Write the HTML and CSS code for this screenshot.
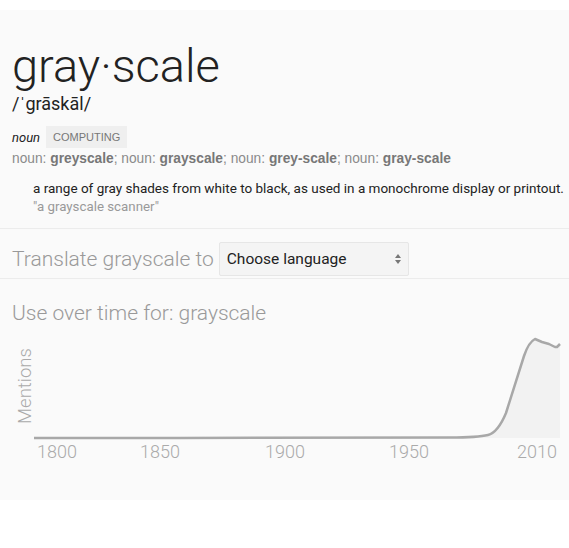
FILE: index.html
```html
<!DOCTYPE html>
<html>
<head>
<meta charset="utf-8">
<link rel="stylesheet" href="styles.css">
</head>
<body>
<div class="panel">
  <div class="entry">
    <div class="headword">gray·scale</div>
    <div class="phonetic">/ˈgrāskāl/</div>
    <div class="pos-row">
      <span class="pos">noun</span>
      <span class="badge">COMPUTING</span>
    </div>
    <div class="forms">noun: <b>greyscale</b>; noun: <b>grayscale</b>; noun: <b>grey-scale</b>; noun: <b>gray-scale</b></div>
    <div class="sense">
      <div class="def">a range of gray shades from white to black, as used in a monochrome display or printout.</div>
      <div class="example">"a grayscale scanner"</div>
    </div>
  </div>
  <div class="translate">
    <span class="translate-label">Translate grayscale to</span>
    <div class="select">
      <span>Choose language</span>
      <svg class="arrows" width="8" height="12" viewBox="0 0 8 12"><path d="M4 1 L7 5 L1 5 Z M4 11 L7 7 L1 7 Z" fill="#777"/></svg>
    </div>
  </div>
  <div class="usage">
    <div class="usage-title">Use over time for: grayscale</div>
    <svg class="chart" width="569" height="130" viewBox="0 335 569 130">
      <path d="M34,437 L180,437 L450,436.5 C470,436.5 480,436 488,434 C496,432 501,424 506,412 L524,355 C527,346 531,340 535,338 L542,341 L549,343 L555,346 L557,346 L560,343 L560,437 Z" fill="#f2f2f2"/>
      <path d="M34,437 L180,437 L450,436.5 C470,436.5 480,436 488,434 C496,432 501,424 506,412 L524,355 C527,346 531,340 535,338 L542,341 L549,343 L555,346 L557,346 L560,343" fill="none" stroke="#a8a8a8" stroke-width="2.5" stroke-linejoin="round"/>
      <text class="axis-title" transform="translate(31,385) rotate(-90)" text-anchor="middle">Mentions</text>
      <text class="tick" x="37" y="457">1800</text>
      <text class="tick" x="140" y="457">1850</text>
      <text class="tick" x="265" y="457">1900</text>
      <text class="tick" x="389" y="457">1950</text>
      <text class="tick" x="517" y="457">2010</text>
    </svg>
  </div>
</div>
</body>
</html>
```
FILE: styles.css
```css
html, body {
  margin: 0;
  padding: 0;
  background: #ffffff;
}
body {
  font-family: Roboto, "Liberation Sans", Arial, sans-serif;
  color: #222;
}
.panel {
  margin-top: 10px;
  height: 490px;
  background: #fafafa;
  box-sizing: border-box;
}
.entry {
  padding: 32px 0 0 12px;
  height: 219px;
  box-sizing: border-box;
  border-bottom: 1px solid #ececec;
}
.headword {
  font-size: 47px;
  font-weight: 300;
  line-height: 47px;
  color: #222;
}
.phonetic {
  font-size: 18px;
  line-height: 22px;
  margin-top: 4px;
  color: #222;
}
.pos-row {
  display: flex;
  align-items: center;
  gap: 6px;
  margin-top: 11px;
  height: 22px;
}
.pos {
  font-style: italic;
  font-size: 13px;
  color: #222;
}
.badge {
  background: #efefef;
  color: #777;
  font-size: 11px;
  line-height: 22px;
  padding: 0 7px;
  font-family: "Liberation Sans", Arial, sans-serif;
}
.forms {
  font-family: "Liberation Sans", Arial, sans-serif;
  font-size: 13.75px;
  line-height: 18px;
  margin-top: 2px;
  color: #8a8a8a;
}
.forms b {
  color: #777;
  font-weight: 700;
}
.sense {
  padding-left: 21px;
  margin-top: 10px;
}
.def {
  font-size: 13.5px;
  line-height: 20px;
  color: #222;
}
.example {
  font-size: 13.3px;
  line-height: 18px;
  color: #999;
}
.translate {
  display: flex;
  gap: 5px;
  height: 50px;
  padding: 13px 0 0 12px;
  align-items: flex-start;
  border-bottom: 1px solid #ececec;
  box-sizing: border-box;
}
.translate-label {
  font-size: 21px;
  font-weight: 300;
  line-height: 34px;
  color: #999;
}
.select {
  width: 190px;
  height: 34px;
  box-sizing: border-box;
  border: 1px solid #e6e6e6;
  border-radius: 2px;
  background: #f4f4f4;
  display: flex;
  align-items: center;
  justify-content: space-between;
  padding: 0 6px 0 7px;
  font-size: 15.5px;
  color: #222;
}
.arrows {
  display: block;
}
.usage {
  padding-top: 22px;
}
.usage-title {
  font-size: 21px;
  font-weight: 300;
  color: #999;
  line-height: 24px;
  padding-left: 12px;
}
.chart {
  display: block;
  margin-top: 11px;
}
.axis-title {
  font-family: Roboto, sans-serif;
  font-weight: 300;
  font-size: 18.5px;
  fill: #aaa;
}
.tick {
  font-family: Roboto, sans-serif;
  font-weight: 300;
  font-size: 18px;
  fill: #aaa;
}
```
